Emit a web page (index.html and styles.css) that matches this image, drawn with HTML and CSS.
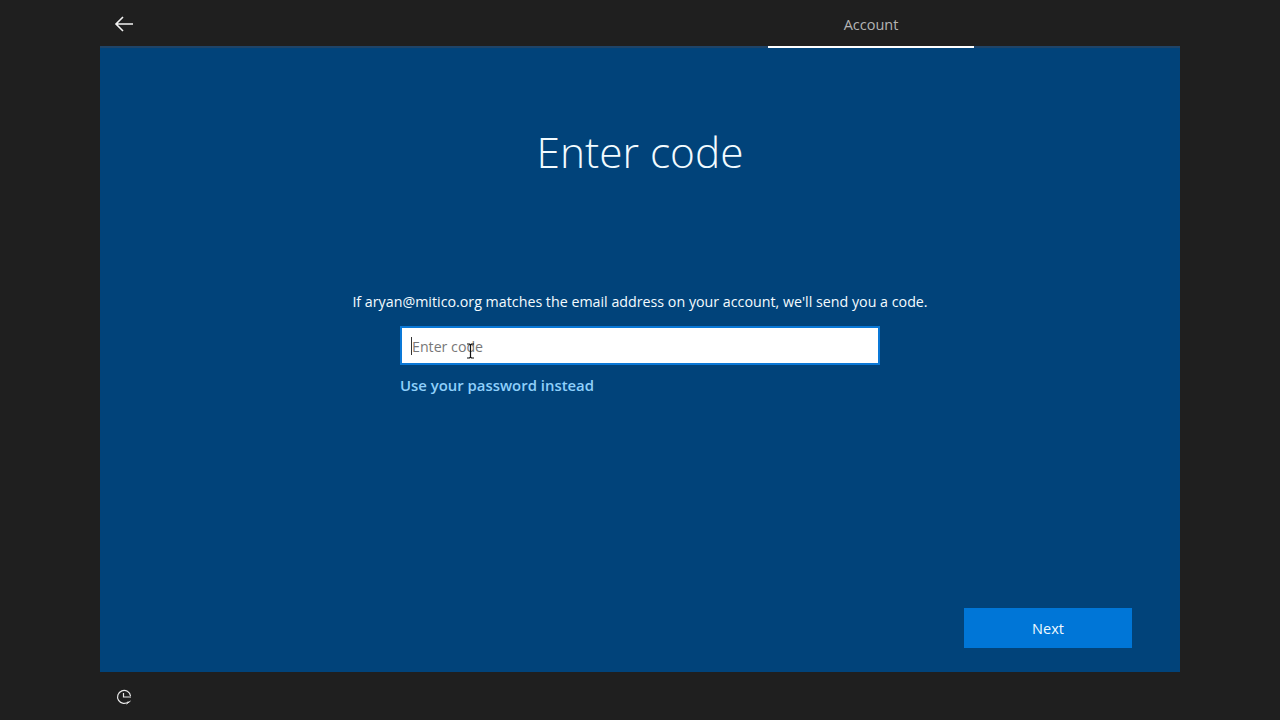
FILE: index.html
```html
<!DOCTYPE html>
<html lang="en">
<head>
<meta charset="utf-8">
<title>Enter code</title>
<link rel="stylesheet" href="styles.css">
</head>
<body>
<div class="shell">
  <header class="topbar">
    <button class="back" aria-label="Back">
      <svg width="20" height="16" viewBox="0 0 20 16"><path d="M9 1 2 8l7 7M2 8h17" fill="none" stroke="#f2f2f2" stroke-width="1.6"/></svg>
    </button>
    <div class="tab">Account</div>
  </header>
  <main class="panel">
    <h1 class="title">Enter code</h1>
    <p class="message">If aryan@mitico.org matches the email address on your account, we'll send you a code.</p>
    <div class="form">
      <div class="field">
        <span class="caret"></span><span class="placeholder">Enter code</span>
        <svg class="ibeam" width="9" height="16" viewBox="0 0 9 16"><path d="M1 1h2.5l1 1 1-1H8M4.5 2v12M1 15h2.5l1-1 1 1H8" fill="none" stroke="#111" stroke-width="1.2"/></svg>
      </div>
      <a class="link" href="#">Use your password instead</a>
    </div>
    <div class="actions">
      <button class="next">Next</button>
    </div>
  </main>
  <footer class="bottombar">
    <svg width="18" height="18" viewBox="0 0 18 18"><path d="M13.6 13.6A6.5 6.5 0 1 1 15.5 8" fill="none" stroke="#e8e8e8" stroke-width="1.2"/><path d="M8.5 5v4H16" fill="none" stroke="#e8e8e8" stroke-width="1.2"/><path d="M11.5 16l4-3" fill="none" stroke="#e8e8e8" stroke-width="1"/></svg>
  </footer>
</div>
</body>
</html>
```
FILE: styles.css
```css
* { box-sizing: border-box; }
html, body { margin: 0; height: 100%; }
body {
  background: #1f1f1f;
  font-family: "Open Sans", "Noto Sans", "Liberation Sans", sans-serif;
  color: #fff;
  overflow: hidden;
}
.shell {
  width: 1280px;
  height: 720px;
  padding: 0 100px;
  display: flex;
  flex-direction: column;
}
.topbar {
  height: 46px;
  display: flex;
  flex: none;
  justify-content: space-between;
  position: relative;
}
.back {
  background: none;
  border: 0;
  padding: 0;
  margin: 16px 0 0 14px;
  width: 20px;
  height: 16px;
  line-height: 0;
}
.tab {
  width: 206px;
  margin-right: 206px;
  height: 48px;
  padding-top: 15px;
  font-size: 14.5px;
  line-height: 20px;
  color: #b4b4b4;
  text-align: center;
  border-bottom: 2px solid #fff;
  position: relative;
  z-index: 1;
}
.panel {
  height: 626px;
  flex: none;
  background: #01437a;
  border-top: 2px solid #1f4468;
  display: flex;
  flex-direction: column;
  align-items: center;
}
.title {
  margin: 74px 0 0;
  font-size: 42.4px;
  line-height: 60px;
  font-weight: 300;
  color: #f2fbff;
}
.message {
  margin: 110px 0 0;
  font-size: 14.25px;
  line-height: 20px;
  color: #f4fbff;
}
.form {
  width: 480px;
  margin-top: 14px;
}
.field {
  height: 39px;
  background: #fff;
  border: 2px solid #0a78d7;
  display: flex;
  align-items: center;
  padding: 1px 0 0 9px;
  position: relative;
}
.caret {
  width: 1px;
  height: 18px;
  background: #333;
  flex: none;
}
.placeholder {
  font-size: 14.2px;
  color: #777;
}
.ibeam {
  position: absolute;
  left: 64px;
  top: 15px;
}
.link {
  display: block;
  margin-top: 10px;
  font-size: 14.9px;
  line-height: 20px;
  font-weight: 600;
  color: #8fd0fb;
  text-decoration: none;
}
.actions {
  margin-top: auto;
  align-self: flex-end;
  margin-right: 48px;
  margin-bottom: 24px;
}
.next {
  display: block;
  width: 168px;
  height: 40px;
  background: #0076d7;
  border: 0;
  color: #f0faff;
  font: inherit;
  font-size: 14.5px;
}
.bottombar {
  flex: 1;
  padding: 16px 0 0 15px;
}
```
